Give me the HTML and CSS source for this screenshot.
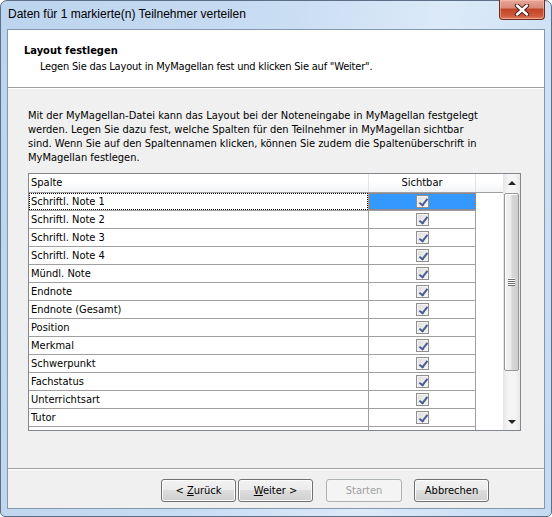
FILE: index.html
```html
<!DOCTYPE html>
<html lang="de">

<head>
    <meta charset="UTF-8">
    <title>Daten für 1 markierte(n) Teilnehmer verteilen</title>
    <link rel="stylesheet" href="styles.css">
</head>

<body>
    <div class="window">
        <div class="titlebar">
            <span class="title">Daten für 1 markierte(n) Teilnehmer verteilen</span>
            <div class="close-btn">
                <svg width="16" height="12" viewBox="0 0 16 12">
                    <path d="M3 1.5 L13 10.5 M13 1.5 L3 10.5" stroke="#4a1f1a" stroke-width="4.4" stroke-linecap="round" fill="none" />
                    <path d="M3 1.5 L13 10.5 M13 1.5 L3 10.5" stroke="#ffffff" stroke-width="2.4" stroke-linecap="round" fill="none" />
                </svg>
            </div>
        </div>

        <div class="client">
            <div class="wizard-header">
                <h1>Layout festlegen</h1>
                <p>Legen Sie das Layout in MyMagellan fest und klicken Sie auf "Weiter".</p>
            </div>

            <div class="wizard-body">
                <p class="intro">
                    Mit der MyMagellan-Datei kann das Layout bei der Noteneingabe in MyMagellan festgelegt<br>
                    werden. Legen Sie dazu fest, welche Spalten für den Teilnehmer in MyMagellan sichtbar<br>
                    sind. Wenn Sie auf den Spaltennamen klicken, können Sie zudem die Spaltenüberschrift in<br>
                    MyMagellan festlegen.
                </p>

                <div class="grid">
                    <div class="grid-rows">
                        <div class="row head">
                            <div class="cell name">Spalte</div>
                            <div class="cell check">Sichtbar</div>
                        </div>
                        <div class="row selected">
                            <div class="cell name"><span class="focus">Schriftl. Note 1</span></div>
                            <div class="cell check"><span class="cb"></span></div>
                        </div>
                        <div class="row">
                            <div class="cell name">Schriftl. Note 2</div>
                            <div class="cell check"><span class="cb"></span></div>
                        </div>
                        <div class="row">
                            <div class="cell name">Schriftl. Note 3</div>
                            <div class="cell check"><span class="cb"></span></div>
                        </div>
                        <div class="row">
                            <div class="cell name">Schriftl. Note 4</div>
                            <div class="cell check"><span class="cb"></span></div>
                        </div>
                        <div class="row">
                            <div class="cell name">Mündl. Note</div>
                            <div class="cell check"><span class="cb"></span></div>
                        </div>
                        <div class="row">
                            <div class="cell name">Endnote</div>
                            <div class="cell check"><span class="cb"></span></div>
                        </div>
                        <div class="row">
                            <div class="cell name">Endnote (Gesamt)</div>
                            <div class="cell check"><span class="cb"></span></div>
                        </div>
                        <div class="row">
                            <div class="cell name">Position</div>
                            <div class="cell check"><span class="cb"></span></div>
                        </div>
                        <div class="row">
                            <div class="cell name">Merkmal</div>
                            <div class="cell check"><span class="cb"></span></div>
                        </div>
                        <div class="row">
                            <div class="cell name">Schwerpunkt</div>
                            <div class="cell check"><span class="cb"></span></div>
                        </div>
                        <div class="row">
                            <div class="cell name">Fachstatus</div>
                            <div class="cell check"><span class="cb"></span></div>
                        </div>
                        <div class="row">
                            <div class="cell name">Unterrichtsart</div>
                            <div class="cell check"><span class="cb"></span></div>
                        </div>
                        <div class="row">
                            <div class="cell name">Tutor</div>
                            <div class="cell check"><span class="cb"></span></div>
                        </div>
                        <div class="row">
                            <div class="cell name"></div>
                            <div class="cell check"></div>
                        </div>
                    </div>

                    <div class="scrollbar">
                        <div class="sb-arrow"><span class="arrow-up"></span></div>
                        <div class="sb-track">
                            <div class="sb-thumb"><span class="grip"></span></div>
                        </div>
                        <div class="sb-arrow"><span class="arrow-down"></span></div>
                    </div>
                </div>
            </div>

            <div class="wizard-footer">
                <button class="btn">&lt; <u>Z</u>urück</button>
                <button class="btn btn-next"><u>W</u>eiter &gt;</button>
                <button class="btn btn-start" disabled>Starten</button>
                <button class="btn btn-cancel">Abbrechen</button>
            </div>
        </div>
    </div>
</body>

</html>
```

FILE: styles.css
```css
* {
    margin: 0;
    padding: 0;
    box-sizing: border-box;
}

body {
    font-family: "DejaVu Sans Condensed", "DejaVu Sans", sans-serif;
    font-size: 11px;
    color: #000;
    background: #fff;
}

.window {
    width: 552px;
    height: 517px;
    border: 1px solid #5c6f86;
    border-radius: 7px 7px 5px 5px;
    background: linear-gradient(100deg, #bcd4ee 0%, #c9ddf3 45%, #dceaf8 70%, #c4dbf2 100%);
    display: flex;
    flex-direction: column;
}

.titlebar {
    height: 28px;
    display: flex;
    justify-content: space-between;
    align-items: flex-start;
    padding-left: 7px;
    padding-right: 6px;
}

.title {
    font-family: "Liberation Sans", Arial, sans-serif;
    font-size: 12px;
    line-height: 26px;
    color: #000;
}

.close-btn {
    width: 46px;
    height: 20px;
    margin-top: -1px;
    border: 1px solid #6b2c23;
    border-top: none;
    border-radius: 0 0 4px 4px;
    background: linear-gradient(#e8a797 0%, #d98a78 40%, #c24528 50%, #cf5b3c 85%, #e08a66 100%);
    box-shadow: inset 0 0 0 1px rgba(255, 200, 180, 0.5);
    display: flex;
    align-items: center;
    justify-content: center;
}

.client {
    flex: 1;
    margin: 0 6px 7px 6px;
    border: 1px solid #8497ad;
    background: #f0f0f0;
    display: flex;
    flex-direction: column;
}

.wizard-header {
    height: 58px;
    background: #fff;
    border-bottom: 1px solid #a0a0a0;
    padding: 14px 0 0 16px;
}

.wizard-header h1 {
    font-size: 11px;
    font-weight: bold;
    line-height: 14px;
    margin-bottom: 2px;
}

.wizard-header p {
    padding-left: 16px;
    line-height: 14px;
    letter-spacing: -0.2px;
}

.wizard-body {
    flex: 1;
    border-top: 1px solid #fff;
    padding: 20px 0 0 20px;
}

.intro {
    line-height: 14px;
    margin-bottom: 8px;
}

.grid {
    width: 493px;
    height: 258px;
    border: 1px solid #828790;
    background: #fff;
    display: flex;
    overflow: hidden;
}

.grid-rows {
    flex: 1;
    overflow: hidden;
}

.row {
    display: flex;
    height: 18px;
    border-bottom: 1px solid #a0a0a0;
    width: 447px;
}

.cell {
    height: 17px;
    line-height: 17px;
    white-space: nowrap;
}

.cell.name {
    width: 340px;
    padding-left: 2px;
    border-right: 1px solid #a0a0a0;
}

.cell.check {
    width: 107px;
    border-right: 1px solid #a0a0a0;
    display: flex;
    align-items: center;
    justify-content: center;
}

.row.head {
    width: 474px;
    height: 19px;
    border-bottom: 1px solid #a0a0a0;
    background: linear-gradient(#ffffff 0%, #ffffff 40%, #f3f4f6 100%);
}

.row.head .cell {
    height: 18px;
    line-height: 18px;
    border-right-color: #e2e3e5;
}

.row.selected .cell.name {
    padding: 0;
}

.focus {
    display: block;
    height: 17px;
    line-height: 15px;
    padding-left: 1px;
    border: 1px dotted #000;
}

.row.selected .cell.check {
    background: #3399ff;
    border: 1px dotted #e8751a;
}

.cb {
    position: relative;
    width: 13px;
    height: 13px;
    border: 1px solid #8f8f8f;
    background: linear-gradient(135deg, #dcdcdc 0%, #eeeeee 60%, #f6f6f6 100%);
    box-shadow: inset 0 0 0 1px #f4f4f4;
}

.cb::after {
    content: "";
    position: absolute;
    left: 4px;
    top: 1px;
    width: 3px;
    height: 7px;
    border-right: 2px solid #4a5c92;
    border-bottom: 2px solid #4a5c92;
    transform: rotate(38deg);
}

.scrollbar {
    width: 17px;
    display: flex;
    flex-direction: column;
    background: linear-gradient(90deg, #e6e6e6 0%, #f4f4f4 30%, #f4f4f4 70%, #e8e8e8 100%);
}

.sb-arrow {
    height: 17px;
    display: flex;
    align-items: center;
    justify-content: center;
}

.arrow-up {
    width: 0;
    height: 0;
    border-left: 4px solid transparent;
    border-right: 4px solid transparent;
    border-bottom: 4px solid #222;
}

.arrow-down {
    width: 0;
    height: 0;
    border-left: 4px solid transparent;
    border-right: 4px solid transparent;
    border-top: 4px solid #222;
}

.sb-track {
    flex: 1;
    padding-top: 2px;
}

.sb-thumb {
    width: 15px;
    height: 178px;
    margin-left: 1px;
    border: 1px solid #979797;
    border-radius: 2px;
    background: linear-gradient(90deg, #f3f3f3 0%, #ececec 45%, #d6d6d6 55%, #cfcfcf 100%);
    box-shadow: inset 1px 1px 0 #fff;
    display: flex;
    align-items: center;
    justify-content: center;
}

.grip {
    width: 7px;
    height: 8px;
    background: repeating-linear-gradient(#fff 0, #fff 1px, #707070 1px, #707070 2px);
}

.wizard-footer {
    height: 40px;
    border-top: 1px solid #a0a0a0;
    box-shadow: inset 0 1px 0 #fff;
    display: flex;
    justify-content: flex-end;
    padding: 10px 55px 0 0;
    gap: 2px;
}

.btn {
    width: 75px;
    height: 23px;
    font-family: inherit;
    font-size: 11px;
    color: #000;
    border: 1px solid #707070;
    border-radius: 3px;
    background: linear-gradient(#f2f2f2 0%, #ebebeb 49%, #dddddd 50%, #cfcfcf 100%);
    box-shadow: inset 0 0 0 1px #fcfcfc;
}

.btn u {
    text-decoration: underline;
}

.btn-start {
    margin-left: 11px;
    width: 76px;
    color: #a0a0a0;
    border-color: #adb2b5;
    background: #f4f4f4;
    box-shadow: none;
}

.btn-cancel {
    margin-left: 10px;
}
```
